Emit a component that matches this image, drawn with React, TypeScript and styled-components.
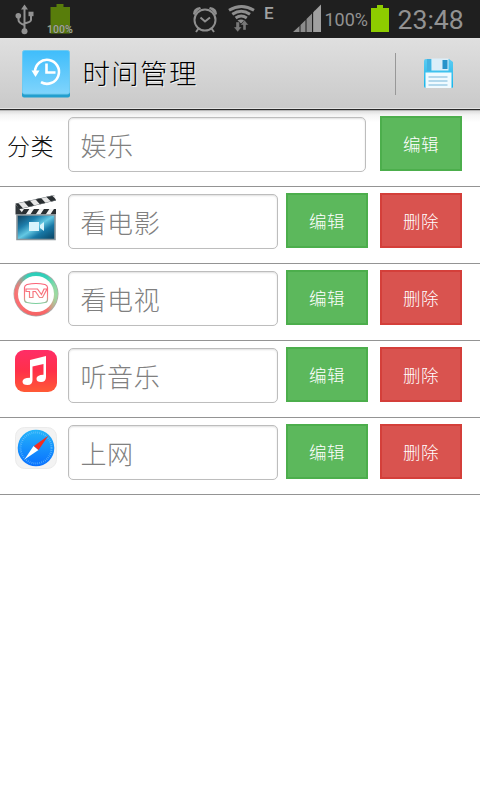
import React from "react";
import styled, { createGlobalStyle } from "styled-components";

const GlobalStyle = createGlobalStyle`
  * { box-sizing: border-box; }
  body { margin: 0; background: #fff; }
  svg { display: block; flex: none; }
`;

const cjk = `"Noto Sans CJK SC", sans-serif`;

const Screen = styled.div`
  width: 480px;
  height: 800px;
  display: flex;
  flex-direction: column;
  background: #fff;
  overflow: hidden;
  font-family: ${cjk};
`;

const StatusBar = styled.div`
  height: 38px;
  flex: none;
  display: flex;
  background: #1f1f1f;
  color: #969696;
  font-family: Roboto, sans-serif;
`;

const NetworkType = styled.span`
  width: 28px;
  padding: 4px 0 0 8px;
  font-size: 17px;
  line-height: 19px;
  font-weight: 500;
  color: #a2a2a2;
`;

const BatteryLevel = styled.span`
  width: 47px;
  padding-left: 3.5px;
  font-size: 18px;
  line-height: 40px;
  color: #929292;
  white-space: nowrap;
`;

const Clock = styled.span`
  padding-left: 7.5px;
  font-size: 26.6px;
  line-height: 39px;
  color: #929292;
`;

const ActionBar = styled.header`
  height: 72px;
  flex: none;
  display: flex;
  align-items: center;
  padding: 0 26px 2px 22px;
  background: linear-gradient(#dfdfdf, #c9c9c9);
  border-top: 1px solid #e2e2e2;
  box-shadow: inset 0 -1px #282828, inset 0 -2px #e4e4e4;
`;

const Title = styled.h1`
  flex: 1;
  margin: 0;
  padding: 0 0 3px 12.5px;
  font-size: 27.5px;
  line-height: 40px;
  font-weight: 300;
  letter-spacing: 1.3px;
  color: #000;
  text-shadow: 1px 1px #f4f4f4;
`;

const Separator = styled.div`
  width: 1px;
  height: 42px;
  margin-right: 27px;
  background: #989898;
`;

const List = styled.main`
  display: flex;
  flex-direction: column;
  background: linear-gradient(#b8b8b8 1px, #dedede 1px, #f4f4f4 5px, #fff 12px);
`;

const Row = styled.div`
  height: 77px;
  display: flex;
  padding: 6px 18px 0 0;
  border-bottom: 1px solid #949494;
`;

const Label = styled.div`
  width: 68px;
  height: 60px;
  flex: none;
  padding-left: 7px;
  font-size: 23px;
  line-height: 58px;
  font-weight: 300;
  letter-spacing: 0.5px;
  color: #111;
`;

const IconCell = styled.div`
  width: 68px;
  flex: none;
  padding-left: 12px;
`;

const Field = styled.div<{ $wide?: boolean }>`
  width: ${(p) => (p.$wide ? 298 : 210)}px;
  height: 55px;
  flex: none;
  margin: 1px ${(p) => (p.$wide ? 14 : 8)}px 0 0;
  padding-left: 11.5px;
  border: 1px solid #bdbdbd;
  border-radius: 5px;
  background: #fff;
  box-shadow: inset 0 1px 2px rgba(0, 0, 0, 0.13);
  font-size: 26px;
  line-height: 54px;
  font-weight: 300;
  letter-spacing: 0.6px;
  color: #808080;
`;

const Button = styled.button<{ $danger?: boolean }>`
  width: 82px;
  height: 55px;
  flex: none;
  margin: 0 12px 0 0;
  padding: 1px 0 0;
  border: 2px solid ${(p) => (p.$danger ? "#d43f3a" : "#4cae4c")};
  background: ${(p) => (p.$danger ? "#d9534f" : "#5cb85c")};
  color: #fff;
  font: 300 17.5px/50px ${cjk};
  letter-spacing: 0.4px;
`;

const LeftIcons = () => (
  <svg width="192" height="38" viewBox="0 0 192 38">
    <g stroke="#929292" fill="none" strokeWidth="2">
      <path d="M24.500 8V30M18.500 16v4q0 3 6 5M31 15v5q0 2-6.500 3.500" />
    </g>
    <path d="M24.500 4.500l3.500 5h-7z" fill="#929292" />
    <circle cx="18.300" cy="15.700" r="2.800" fill="#929292" />
    <circle cx="24.500" cy="31.300" r="3" fill="#929292" />
    <rect x="28.500" y="11.700" width="5" height="4.500" fill="#929292" />
    <path d="M56.500 4h7v3H70v26.500H50.500V7h6z" fill="#587d0b" />
    <text x="47" y="32.500" fontFamily="Roboto, sans-serif" fontWeight="500" fontSize="10.500" fill="#a3a79a" stroke="#44542d" strokeWidth=".6" paintOrder="stroke">100%</text>
  </svg>
);

const AlarmWifi = () => (
  <svg width="64" height="38" viewBox="192 0 64 38">
    <g fill="none" stroke="#8e8e8e" strokeWidth="2">
      <circle cx="205" cy="20" r="10.500" />
      <path d="M200.500 17.500l4.500 4 5-4M198.500 28.500l-2.500 3.500M211.500 28.500l2.500 3.500" />
    </g>
    <path d="M193 14q0-6 7-7l1 1.500q-4 2-6.500 6.500zM217 14q0-6-7-7l-1 1.500q4 2 6.500 6.500z" fill="#8e8e8e" />
    <g fill="none" stroke="#8e8e8e" strokeWidth="3">
      <path d="M229 10.200q12.500-7.500 25 0M232.300 14.300q9-6 17.700 0M235.600 18q5.700-4 11.200 0" />
    </g>
    <path d="M237.500 20.500q3.500-2 7 0l-3.500 3z" fill="#8e8e8e" />
    <path d="M236 22h3.500v5h2.200l-4 5-4-5H236zM243 30v-5h-2.500l4-5 4 5H246v5z" fill="#777" stroke="#1f1f1f" strokeWidth=".4" />
  </svg>
);

const Signal = () => (
  <svg width="37" height="38" viewBox="284 0 37 38">
    <path d="M293 32l6.500-6v6zM300.500 32v-7l5-5v12zM306.500 32V19l5.500-5.500V32zM313 32V12.500l2-2V32z" fill="#8c8c8c" />
    <path d="M314 11.500l7-7V32h-7z" fill="#a0a0a0" />
  </svg>
);

const Battery = () => (
  <svg width="22" height="38" viewBox="368 0 22 38">
    <path d="M377 5h6v3h6v24h-18V8h6z" fill="#8dcc00" />
  </svg>
);

const AppIcon = () => (
  <svg width="48" height="48" viewBox="0 0 48 48">
    <defs>
      <linearGradient id="app" x2="0" y2="1">
        <stop stopColor="#3fbdfb" />
        <stop offset="1" stopColor="#80d4fc" />
      </linearGradient>
    </defs>
    <rect y="3" width="48" height="44.500" rx="2" fill="#239fce" />
    <rect x=".5" y=".5" width="47" height="43.500" rx="2" fill="url(#app)" stroke="#70caef" />
    <path d="M13 22a12 12 0 1 1 6 10.200" fill="none" stroke="#fff" strokeWidth="2.600" />
    <path d="M9.500 20.500h8l-4 6.500z" fill="#fff" />
    <path d="M24.500 13.500V22.500h9" fill="none" stroke="#fff" strokeWidth="2.600" />
  </svg>
);

const SaveIcon = () => (
  <svg width="31" height="31" viewBox="0 0 31 31">
    <defs>
      <linearGradient id="disk" x2="0" y2="1">
        <stop stopColor="#5ccbf2" />
        <stop offset="1" stopColor="#15b5ea" />
      </linearGradient>
    </defs>
    <path d="M3 1h23l4 3v25q0 1-2 1H3q-2 0-2-2V3q0-2 2-2z" fill="url(#disk)" />
    <path d="M4 1h4v12H4z" fill="#43b3e2" />
    <path d="M8.500.5h17v12h-17z" fill="#dceef9" />
    <path d="M19.500 2h5v9h-5z" fill="#2793ca" />
    <path d="M2.500 14.500h26V30h-26z" fill="#effaff" />
    <path d="M5.500 19h19M5.500 23h19M5.500 27h19" stroke="#9fcde6" strokeWidth="1.500" />
  </svg>
);

const MovieIcon = () => (
  <svg width="46" height="48" viewBox="0 0 46 48">
    <defs>
      <linearGradient id="film" x2="1" y2="1">
        <stop stopColor="#103c58" />
        <stop offset=".3" stopColor="#1d7daa" />
        <stop offset=".5" stopColor="#64c8e3" />
        <stop offset=".68" stopColor="#1878a6" />
        <stop offset="1" stopColor="#07405f" />
      </linearGradient>
      <clipPath id="clapTop"><path d="M3.500 10.500L42.500 2l1.500 5.500L7 16.500z" /></clipPath>
      <clipPath id="clapBottom"><path d="M4 16h40v5.500H4z" /></clipPath>
    </defs>
    <g clipPath="url(#clapTop)">
      <path d="M0 0h46v22H0z" fill="#e6e6e6" />
      <path d="M1 8l9 10M12 5l9 10M23 2l9 10M34 0l9 9" stroke="#292e31" strokeWidth="5" />
      <path d="M3.500 10.500L42.500 2M7 16.500L44 7.500" stroke="#777d80" strokeWidth="1" />
    </g>
    <g clipPath="url(#clapBottom)">
      <path d="M0 12h46v12H0z" fill="#f2f2f2" />
      <path d="M10 23l6-9M20 23l6-9M30 23l6-9M40 23l6-9" stroke="#292e31" strokeWidth="4.500" />
    </g>
    <path d="M3.500 11l8 10.500h-8z" fill="#30363a" />
    <path d="M5 22h38v24.500H5z" fill="url(#film)" stroke="#8b969c" strokeWidth="1.600" />
    <path d="M17 29h10v9H17zM28 32l4-3v9l-4-3z" fill="#d8f4fc" />
  </svg>
);

const TvIcon = () => (
  <svg width="48" height="48" viewBox="0 0 48 48">
    <defs>
      <linearGradient id="ring" x1=".5" y1="0" x2=".45" y2="1">
        <stop stopColor="#25cdbb" />
        <stop offset=".2" stopColor="#48d3b3" />
        <stop offset=".5" stopColor="#e5b994" />
        <stop offset=".7" stopColor="#fa7c78" />
        <stop offset="1" stopColor="#f65f62" />
      </linearGradient>
      <linearGradient id="ringEdge">
        <stop stopColor="#fb6970" />
        <stop offset=".3" stopColor="#fb6970" stopOpacity="0" />
        <stop offset=".75" stopColor="#8ee0a4" stopOpacity="0" />
        <stop offset="1" stopColor="#8ee0a4" />
      </linearGradient>
      <linearGradient id="tv" gradientUnits="userSpaceOnUse" x1="0" y1="15" x2="0" y2="35">
        <stop stopColor="#fb6075" />
        <stop offset=".6" stopColor="#f58283" />
        <stop offset="1" stopColor="#5fe0a3" />
      </linearGradient>
    </defs>
    <circle cx="24" cy="24" r="22.500" fill="#aaa" />
    <circle cx="24" cy="24" r="21.700" fill="url(#ring)" />
    <circle cx="24" cy="24" r="21.700" fill="url(#ringEdge)" />
    <circle cx="24" cy="24" r="18" fill="#fff" />
    <path d="M15 14.500q9-2 18 0 2.500 1 2.500 3v12q0 2.500-2.500 3-9 2-18 0-2.500-.5-2.500-3v-12q0-2 2.500-3z" fill="none" stroke="url(#tv)" strokeWidth="1.200" />
    <path d="M14 19h11.500l4 5.500 2.500-5.500h3l-4.500 8.500h-3l-4-6h-2.500v6h-3.500v-6H14z" fill="#fff" stroke="url(#tv)" strokeWidth="1.200" />
  </svg>
);

const MusicIcon = () => (
  <svg width="48" height="48" viewBox="0 0 48 48">
    <defs>
      <linearGradient id="music" x2="0" y2="1">
        <stop stopColor="#ff2d67" />
        <stop offset=".5" stopColor="#ff3049" />
        <stop offset="1" stopColor="#ff5a36" />
      </linearGradient>
    </defs>
    <rect x="3" y="3" width="42" height="42" rx="9" fill="url(#music)" />
    <path d="M18 13L34 9v21q0 5-5 5-4.500 0-4.500-3.300 0-3.700 7-4V17L20.500 19.500V33q0 5-5 5-5 0-5-3.500 0-3.500 7.500-3.800z" fill="#fff" />
  </svg>
);

const CompassIcon = () => (
  <svg width="48" height="48" viewBox="0 0 48 48">
    <defs>
      <linearGradient id="compass" x2="0" y2="1">
        <stop stopColor="#25b4fa" />
        <stop offset="1" stopColor="#0870ff" />
      </linearGradient>
    </defs>
    <rect x="3.500" y="3.500" width="41" height="41" rx="9" fill="#f3f3f3" stroke="#ebebeb" />
    <circle cx="24" cy="24" r="18.300" fill="url(#compass)" />
    <circle cx="24" cy="24" r="15.500" fill="none" stroke="#83cdfc" strokeWidth="2" strokeDasharray=".7 1.300" opacity=".7" />
    <path d="M12.500 35.500l9-13.500 5 4z" fill="#fff" />
    <path d="M36.500 11.500L22 22l4.500 4z" fill="#f32c20" />
  </svg>
);

const activities = [
  { name: "看电影", Icon: MovieIcon },
  { name: "看电视", Icon: TvIcon },
  { name: "听音乐", Icon: MusicIcon },
  { name: "上网", Icon: CompassIcon },
];

export default function App() {
  return (
    <Screen>
      <GlobalStyle />
      <StatusBar>
        <LeftIcons />
        <AlarmWifi />
        <NetworkType>E</NetworkType>
        <Signal />
        <BatteryLevel>100%</BatteryLevel>
        <Battery />
        <Clock>23:48</Clock>
      </StatusBar>
      <ActionBar>
        <AppIcon />
        <Title>时间管理</Title>
        <Separator />
        <SaveIcon />
      </ActionBar>
      <List>
        <Row>
          <Label>分类</Label>
          <Field $wide>娱乐</Field>
          <Button>编辑</Button>
        </Row>
        {activities.map(({ name, Icon }) => (
          <Row key={name}>
            <IconCell><Icon /></IconCell>
            <Field>{name}</Field>
            <Button>编辑</Button>
            <Button $danger>删除</Button>
          </Row>
        ))}
      </List>
    </Screen>
  );
}
